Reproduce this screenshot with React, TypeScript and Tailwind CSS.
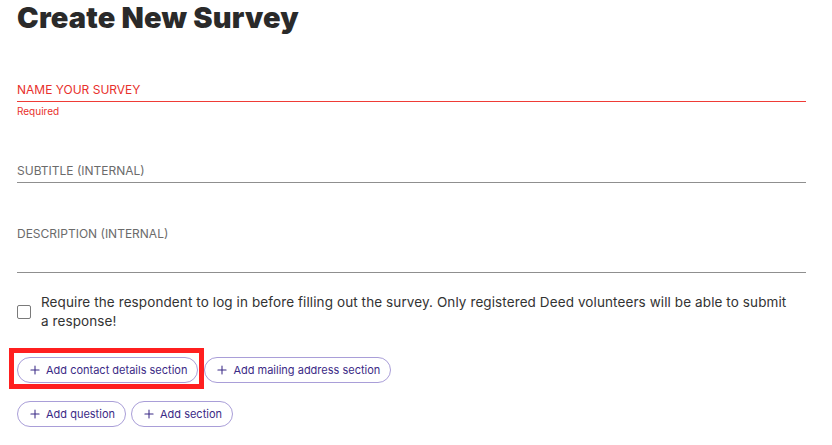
import { Plus } from "lucide-react"

// Кнопка-пилюля для добавления секций
function AddButton({ label }: { label: string }) {
  return (
    <button className="flex h-[26px] items-center gap-[4px] rounded-full border border-[#a99ed8] bg-white pl-[10px] pr-[10px] text-[11px] text-[#3b2a86]">
      <Plus size={14} strokeWidth={1.8} />
      <span>{label}</span>
    </button>
  )
}

export default function App() {
  return (
    <main
      className="min-h-screen w-[832px] bg-white pl-[17px] pr-[26px] text-[#2b2b2b]"
      style={{ fontFamily: "Inter, 'Liberation Sans', sans-serif" }}
    >
      <h1 className="pt-[1px] text-[29px] font-black leading-[34px] tracking-[0.2px] text-[#2a2a2a]">
        Create New Survey
      </h1>

      {/* Название */}
      <div className="mt-[47px]">
        <div className="border-b border-[#ef3b36] pb-[3px] text-[12px] leading-[16px] text-[#e8302c]">
          NAME YOUR SURVEY
        </div>
        <div className="mt-[2px] text-[10px] leading-[14px] text-[#e8302c]">Required</div>
      </div>

      {/* Подзаголовок */}
      <div className="mt-[45px] border-b border-[#8f8f8f] pb-[3px] text-[12px] leading-[16px] text-[#6b6b6b]">
        SUBTITLE (INTERNAL)
      </div>

      {/* Описание */}
      <div className="mt-[43px] h-[47px] border-b border-[#8f8f8f] text-[12px] leading-[16px] text-[#6b6b6b]">
        DESCRIPTION (INTERNAL)
      </div>

      <label className="mt-[20px] flex items-center gap-[10px] pr-[14px]">
        <span className="h-[14px] w-[14px] shrink-0 rounded-[2px] border border-[#7a7a7a]" />
        <span className="text-[13.5px] leading-[19px] tracking-[0.1px] text-[#333]">
          Require the respondent to log in before filling out the survey. Only registered Deed volunteers will be
          able to submit a response!
        </span>
      </label>

      <div className="mt-[26px] flex items-center gap-[6px]">
        <div className="relative">
          <AddButton label="Add contact details section" />
          {/* Красная рамка-выделение */}
          <div className="pointer-events-none absolute -bottom-[6px] -left-[8px] -right-[6px] -top-[9px] border-[5px] border-[#ff1f1f]" />
        </div>
        <AddButton label="Add mailing address section" />
      </div>

      <div className="mt-[18px] flex items-center gap-[5px]">
        <AddButton label="Add question" />
        <AddButton label="Add section" />
      </div>
    </main>
  )
}
